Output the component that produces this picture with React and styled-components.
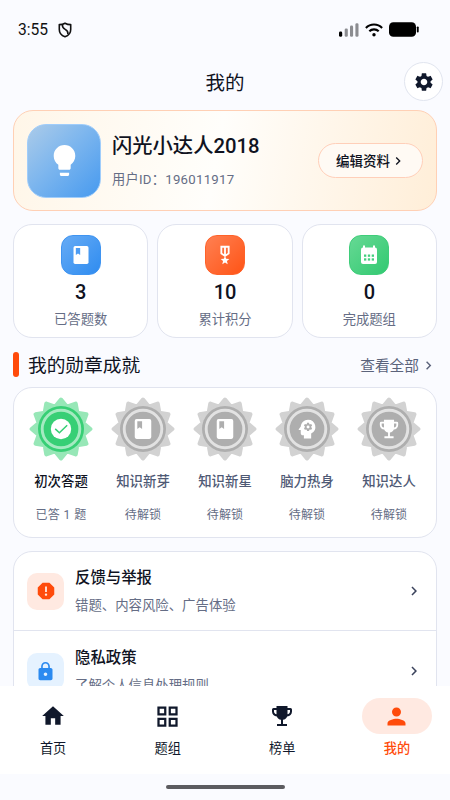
import React from 'react';
import styled, { createGlobalStyle } from 'styled-components';
import {
  MdSettings,
  MdLightbulb,
  MdChevronRight,
  MdOutlineMilitaryTech,
  MdPsychology,
  MdReport,
  MdLock,
  MdHome,
  MdOutlineGridView,
  MdPerson,
} from 'react-icons/md';

const GlobalStyle = createGlobalStyle`
  *{
    box-sizing: border-box;
  }
  body{
    margin: 0;
    background: #fafbff;
    color: #10131f;
    font-family: Roboto, "Noto Sans CJK SC", sans-serif;
  }
  svg{
    display: block;
    flex-shrink: 0;
  }
  h1, h2, h3, p{
    margin: 0;
  }
`;

const Screen = styled.div`
  width: 450px;
  height: 800px;
  display: flex;
  flex-direction: column;
  overflow: hidden;
  background: #fafbff;
`;

const StatusBar = styled.div`
  height: 60px;
  flex-shrink: 0;
  display: flex;
  align-items: center;
  justify-content: space-between;
  padding: 0 31px 1px 18px;

  .left, .right{
    display: flex;
    align-items: center;
  }
  .left{
    gap: 10px;
    font-size: 15.6px;
    line-height: 20px;
    color: #111;
  }
  .right{
    gap: 6px;
  }
`;

const Header = styled.header`
  height: 49px;
  flex-shrink: 0;
  display: grid;
  grid-template-columns: 1fr auto 1fr;
  align-items: start;
  padding: 2px 7px 0;

  h1{
    grid-column: 2;
    padding-top: 2px;
    font-size: 19.5px;
    font-weight: 400;
    line-height: 40px;
  }
`;

const RoundButton = styled.button`
  justify-self: end;
  width: 39px;
  height: 39px;
  padding: 0;
  display: flex;
  align-items: center;
  justify-content: center;
  border: 1px solid #e1e5ef;
  border-radius: 50%;
  background: #fff;
  color: #10182b;
`;

const Content = styled.main`
  flex: 1;
  min-height: 0;
  overflow: hidden;
  padding: 1px 13px 0;
`;

const ProfileCard = styled.section`
  height: 101px;
  display: flex;
  align-items: center;
  padding: 0 13px;
  border: 1px solid #ffd0b5;
  border-radius: 20px;
  background: linear-gradient(100deg, #fff6e8 0%, #fffefb 48%, #fff7ec 70%, #ffeed8 100%);
`;

const Avatar = styled.div`
  width: 74px;
  height: 74px;
  flex-shrink: 0;
  display: flex;
  align-items: center;
  justify-content: center;
  border: 1px solid #a0cdfb;
  border-radius: 19px;
  color: #fff;
  background: linear-gradient(135deg, #abcbe9 0%, #7db6ee 45%, #479aef 100%);
`;

const ProfileText = styled.div`
  flex: 1;
  padding-left: 11px;
  white-space: nowrap;

  h2{
    font-size: 20.3px;
    font-weight: 500;
    line-height: 30px;
  }
  p{
    margin-top: 9px;
    font-size: 13.2px;
    line-height: 20px;
    letter-spacing: .28px;
    color: #656d85;
  }
`;

const EditButton = styled.button`
  width: 105px;
  height: 35px;
  display: flex;
  align-items: center;
  justify-content: center;
  padding: 1px 0 0 1px;
  border: 1px solid #ffcfb9;
  border-radius: 18px;
  background: #fffaf4;
  color: #10131f;
  font: 500 13.5px/20px Roboto, "Noto Sans CJK SC", sans-serif;
`;

const Stats = styled.section`
  display: grid;
  grid-template-columns: repeat(3, 1fr);
  gap: 9px;
  margin-top: 13px;
`;

const StatCard = styled.div`
  height: 114px;
  display: flex;
  flex-direction: column;
  align-items: center;
  padding-top: 10px;
  border: 1px solid #e1e4ef;
  border-radius: 19px;
  background: #fff;

  strong{
    margin-top: 4px;
    font-size: 20px;
    font-weight: 500;
    line-height: 26px;
  }
  span{
    margin-top: 5px;
    font-size: 13.3px;
    line-height: 20px;
    color: #656d85;
  }
`;

const StatIcon = styled.div`
  width: 40px;
  height: 40px;
  display: flex;
  align-items: center;
  justify-content: center;
  border: 1px solid ${({ $edge }) => $edge};
  border-radius: 12px;
  background: linear-gradient(135deg, ${({ $from }) => $from}, ${({ $to }) => $to});
  color: #fff;
`;

const SectionHead = styled.div`
  height: 49px;
  display: flex;
  align-items: center;
  padding-top: 4px;

  &::before{
    content: "";
    width: 6px;
    height: 25px;
    margin-right: 9px;
    border-radius: 3px;
    background: #ff4b0b;
  }
  h2{
    flex: 1;
    padding-top: 3px;
    font-size: 18.7px;
    font-weight: 400;
    line-height: 28px;
  }
  a{
    display: flex;
    align-items: center;
    gap: 1px;
    padding-top: 2px;
    font-size: 14.7px;
    line-height: 22px;
    color: #5b637b;
  }
`;

const Medals = styled.section`
  height: 151px;
  display: grid;
  grid-template-columns: repeat(5, 82px);
  padding: 9px 0 0 6px;
  border: 1px solid #e1e4ef;
  border-radius: 19px;
  background: #fff;
`;

const Medal = styled.div`
  display: flex;
  flex-direction: column;
  align-items: center;
  white-space: nowrap;

  h3{
    margin-top: 11px;
    font-size: 13.4px;
    font-weight: 500;
    line-height: 20px;
    color: ${({ $earned }) => ($earned ? '#10131f' : '#4f5a75')};
  }
  p{
    margin-top: 13px;
    font-size: 12px;
    line-height: 21px;
    letter-spacing: .2px;
    word-spacing: .6px;
    color: #656d85;
  }
`;

const Menu = styled.section`
  margin-top: 13px;
  border: 1px solid #e1e4ef;
  border-radius: 19px;
  background: #fff;
`;

const MenuRow = styled.div`
  height: 78px;
  display: flex;
  align-items: center;
  padding: 0 13px;

  & + &{
    height: 81px;
    border-top: 1px solid #e1e4ef;
  }
  > svg{
    color: #3b435c;
  }
`;

const MenuIcon = styled.div`
  width: 37px;
  height: 37px;
  flex-shrink: 0;
  display: flex;
  align-items: center;
  justify-content: center;
  border-radius: 10px;
  background: ${({ $bg }) => $bg};
  color: ${({ $color }) => $color};
`;

const MenuText = styled.div`
  flex: 1;
  padding: 0 0 0 11px;

  h3{
    font-size: 15.4px;
    font-weight: 500;
    line-height: 24px;
  }
  p{
    margin-top: 5px;
    font-size: 13.4px;
    line-height: 22px;
    color: #656d85;
  }
`;

const TabBar = styled.nav`
  height: 88px;
  flex-shrink: 0;
  display: grid;
  grid-template-columns: repeat(4, 114.6px);
  justify-content: center;
  background: #fff;
`;

const Tab = styled.a`
  display: flex;
  flex-direction: column;
  align-items: center;
  padding-top: 12px;
  font-size: 13.2px;
  line-height: 20px;
  font-weight: ${({ $active }) => ($active ? 500 : 400)};
  color: ${({ $active }) => ($active ? '#ff4b0b' : '#10182b')};

  span{
    width: 70px;
    height: 36px;
    margin-bottom: 5px;
    display: flex;
    align-items: center;
    justify-content: center;
    border-radius: 18px;
    background: ${({ $active }) => ($active ? '#ffe9e1' : 'transparent')};
  }
`;

const HomeIndicator = styled.div`
  height: 26px;
  flex-shrink: 0;
  display: flex;
  justify-content: center;
  padding-top: 11px;

  &::after{
    content: "";
    width: 119px;
    height: 4px;
    border-radius: 2px;
    background: #5c5c60;
  }
`;

const Shield = () => (
  <svg width="14" height="16" viewBox="0 0 14 16" fill="none" stroke="#111" strokeWidth="1.6">
    <path d="M7 1.2C5.400 2.100 3.200 2.600 1.300 2.600V7.500C1.300 11 3.700 13.600 7 14.700C10.300 13.600 12.700 11 12.700 7.500V2.600C10.800 2.600 8.600 2.100 7 1.200Z" strokeLinejoin="round" />
    <path d="M4.400 2.600C4.200 5.200 5 6.300 7.200 7.400C9.600 8.600 10.200 9.900 9.900 12.200" />
  </svg>
);

const Signal = () => (
  <svg width="20" height="14" viewBox="0 0 20 14">
    <rect x="0" y="8.500" width="3.200" height="5.300" rx="1.400" fill="#000" />
    <rect x="5.700" y="5.500" width="3.100" height="8.300" rx="1.300" fill="#8b8c90" />
    <rect x="11" y="2.600" width="3.100" height="11.200" rx="1.300" fill="#8b8c90" />
    <rect x="16.400" y="0.200" width="3.100" height="13.600" rx="1.300" fill="#8b8c90" />
  </svg>
);

const Wifi = () => (
  <svg width="18" height="14" viewBox="0 0 18 14" fill="none" stroke="#000" strokeWidth="2.100">
    <path d="M0.900 4.900C5.300 0.300 12.700 0.300 17.100 4.900" />
    <path d="M4.300 8.300C6.900 5.700 11.100 5.700 13.700 8.300" />
    <circle cx="9" cy="11.700" r="1.700" fill="#000" stroke="none" />
  </svg>
);

const Battery = () => (
  <svg width="30" height="15" viewBox="0 0 30 15">
    <rect x="0" y="0.200" width="27" height="14.600" rx="4.300" />
    <rect x="27.800" y="4.400" width="1.900" height="6" rx="0.900" />
  </svg>
);

const Book = ({ size = 24, mark }) => (
  <svg width={size} height={size} viewBox="0 0 24 24">
    <rect x="3" y="1.200" width="18" height="21.600" rx="2" fill="currentColor" />
    <path d="M5.800 3.600H11V12L8.400 10.200L5.800 12Z" fill={mark} />
  </svg>
);

const Calendar = () => (
  <svg width="18" height="20" viewBox="0 0 18 20">
    <path d="M4 1.200V3M14 1.200V3" stroke="currentColor" strokeWidth="2" strokeLinecap="round" />
    <rect x="1" y="2.500" width="16" height="16.500" rx="2" fill="currentColor" />
    <g fill="#43cf7e">
      <rect x="4" y="9.500" width="2.300" height="2.300" />
      <rect x="7.850" y="9.500" width="2.300" height="2.300" />
      <rect x="11.700" y="9.500" width="2.300" height="2.300" />
      <rect x="4" y="13.300" width="2.300" height="2.300" />
      <rect x="7.850" y="13.300" width="2.300" height="2.300" />
      <rect x="11.700" y="13.300" width="2.300" height="2.300" />
    </g>
  </svg>
);

const Trophy = ({ size = 24 }) => (
  <svg width={size} height={size} viewBox="0 0 24 24" fill="currentColor">
    <path
      fillRule="evenodd"
      d="M6.500 2H17.500V4H20.500Q22 4 22 5.500V7.500C22 10.500 19.800 12.300 17.200 12.500C16.400 14.300 15 15.500 13 15.800V20H17V22H7V20H11V15.800C9 15.500 7.600 14.300 6.800 12.500C4.200 12.300 2 10.500 2 7.500V5.500Q2 4 3.500 4H6.500ZM4 6V7.500C4 9 5 10 6.500 10.300V6ZM20 6V7.500C20 9 19 10 17.500 10.300V6Z"
    />
  </svg>
);

const CheckDisc = () => (
  <svg width="22" height="22" viewBox="0 0 22 22">
    <circle cx="11" cy="11" r="10.200" fill="#fff" />
    <path d="M5.200 10.900L9.400 14.800L17.200 7.200" fill="none" stroke="#37cf75" strokeWidth="1.500" />
  </svg>
);

// twelve rounded points around the rim
const rim = Array.from({ length: 24 }, (_, i) => {
  const r = i % 2 ? 23 : 29.3;
  const a = (i * Math.PI) / 12 - Math.PI / 2;
  return `${(32 + r * Math.cos(a)).toFixed(2)},${(32 + r * Math.sin(a)).toFixed(2)}`;
}).join(' ');

const Badge = ({ earned, size = 22, children }) => {
  const [outer, solid, ring] = earned
    ? ['#97e7b7', '#37cf75', '#a5eac1']
    : ['#d2d2d2', '#aeaeae', '#e2e2e2'];

  return (
    <svg width="64" height="64" viewBox="0 0 64 64">
      <polygon points={rim} fill={outer} stroke={outer} strokeWidth="4.200" strokeLinejoin="round" />
      <circle cx="32" cy="32" r="23" fill={solid} />
      <circle cx="32" cy="32" r="18.800" fill={solid} stroke={ring} strokeWidth="2.900" />
      <svg x={32 - size / 2} y={32 - size / 2} width={size} height={size} color="#fff">
        {children}
      </svg>
    </svg>
  );
};

const stats = [
  { icon: <Book size={20} mark="#4c9cf3" />, value: 3, label: '已答题数', from: '#66abf5', to: '#2f8cf0', edge: '#3f94f1' },
  { icon: <MdOutlineMilitaryTech size={22} />, value: 10, label: '累计积分', from: '#ff8052', to: '#ff5416', edge: '#ff6229' },
  { icon: <Calendar />, value: 0, label: '完成题组', from: '#66d994', to: '#32c971', edge: '#3fcd7a' },
];

const medals = [
  { icon: <CheckDisc />, name: '初次答题', note: '已答 1 题', earned: true },
  { icon: <Book size={22} mark="#aeaeae" />, name: '知识新芽', note: '待解锁' },
  { icon: <Book size={22} mark="#aeaeae" />, name: '知识新星', note: '待解锁' },
  { icon: <MdPsychology size={25} />, size: 25, name: '脑力热身', note: '待解锁' },
  { icon: <Trophy size={22} />, name: '知识达人', note: '待解锁' },
];

const menu = [
  { icon: <MdReport size={22} />, title: '反馈与举报', text: '错题、内容风险、广告体验', bg: '#ffe9e1', color: '#ff4b0b' },
  { icon: <MdLock size={21} />, title: '隐私政策', text: '了解个人信息处理规则', bg: '#e5f2ff', color: '#2b8af0' },
];

const tabs = [
  { icon: <MdHome size={26} />, label: '首页' },
  { icon: <MdOutlineGridView size={27} />, label: '题组' },
  { icon: <Trophy size={24} />, label: '榜单' },
  { icon: <MdPerson size={27} />, label: '我的', active: true },
];

export default function App() {
  return (
    <Screen>
      <GlobalStyle />
      <StatusBar>
        <div className="left">
          3:55
          <Shield />
        </div>
        <div className="right">
          <Signal />
          <Wifi />
          <Battery />
        </div>
      </StatusBar>

      <Header>
        <h1>我的</h1>
        <RoundButton>
          <MdSettings size={22} />
        </RoundButton>
      </Header>

      <Content>
        <ProfileCard>
          <Avatar>
            <MdLightbulb size={37} />
          </Avatar>
          <ProfileText>
            <h2>闪光小达人2018</h2>
            <p>用户ID：196011917</p>
          </ProfileText>
          <EditButton>
            编辑资料
            <MdChevronRight size={16} />
          </EditButton>
        </ProfileCard>

        <Stats>
          {stats.map((s) => (
            <StatCard key={s.label}>
              <StatIcon $from={s.from} $to={s.to} $edge={s.edge}>{s.icon}</StatIcon>
              <strong>{s.value}</strong>
              <span>{s.label}</span>
            </StatCard>
          ))}
        </Stats>

        <SectionHead>
          <h2>我的勋章成就</h2>
          <a>
            查看全部
            <MdChevronRight size={17} />
          </a>
        </SectionHead>

        <Medals>
          {medals.map((m) => (
            <Medal key={m.name} $earned={m.earned}>
              <Badge earned={m.earned} size={m.size}>{m.icon}</Badge>
              <h3>{m.name}</h3>
              <p>{m.note}</p>
            </Medal>
          ))}
        </Medals>

        <Menu>
          {menu.map((row) => (
            <MenuRow key={row.title}>
              <MenuIcon $bg={row.bg} $color={row.color}>{row.icon}</MenuIcon>
              <MenuText>
                <h3>{row.title}</h3>
                <p>{row.text}</p>
              </MenuText>
              <MdChevronRight size={18} />
            </MenuRow>
          ))}
        </Menu>
      </Content>

      <TabBar>
        {tabs.map((t) => (
          <Tab key={t.label} $active={t.active}>
            <span>{t.icon}</span>
            {t.label}
          </Tab>
        ))}
      </TabBar>
      <HomeIndicator />
    </Screen>
  );
}
